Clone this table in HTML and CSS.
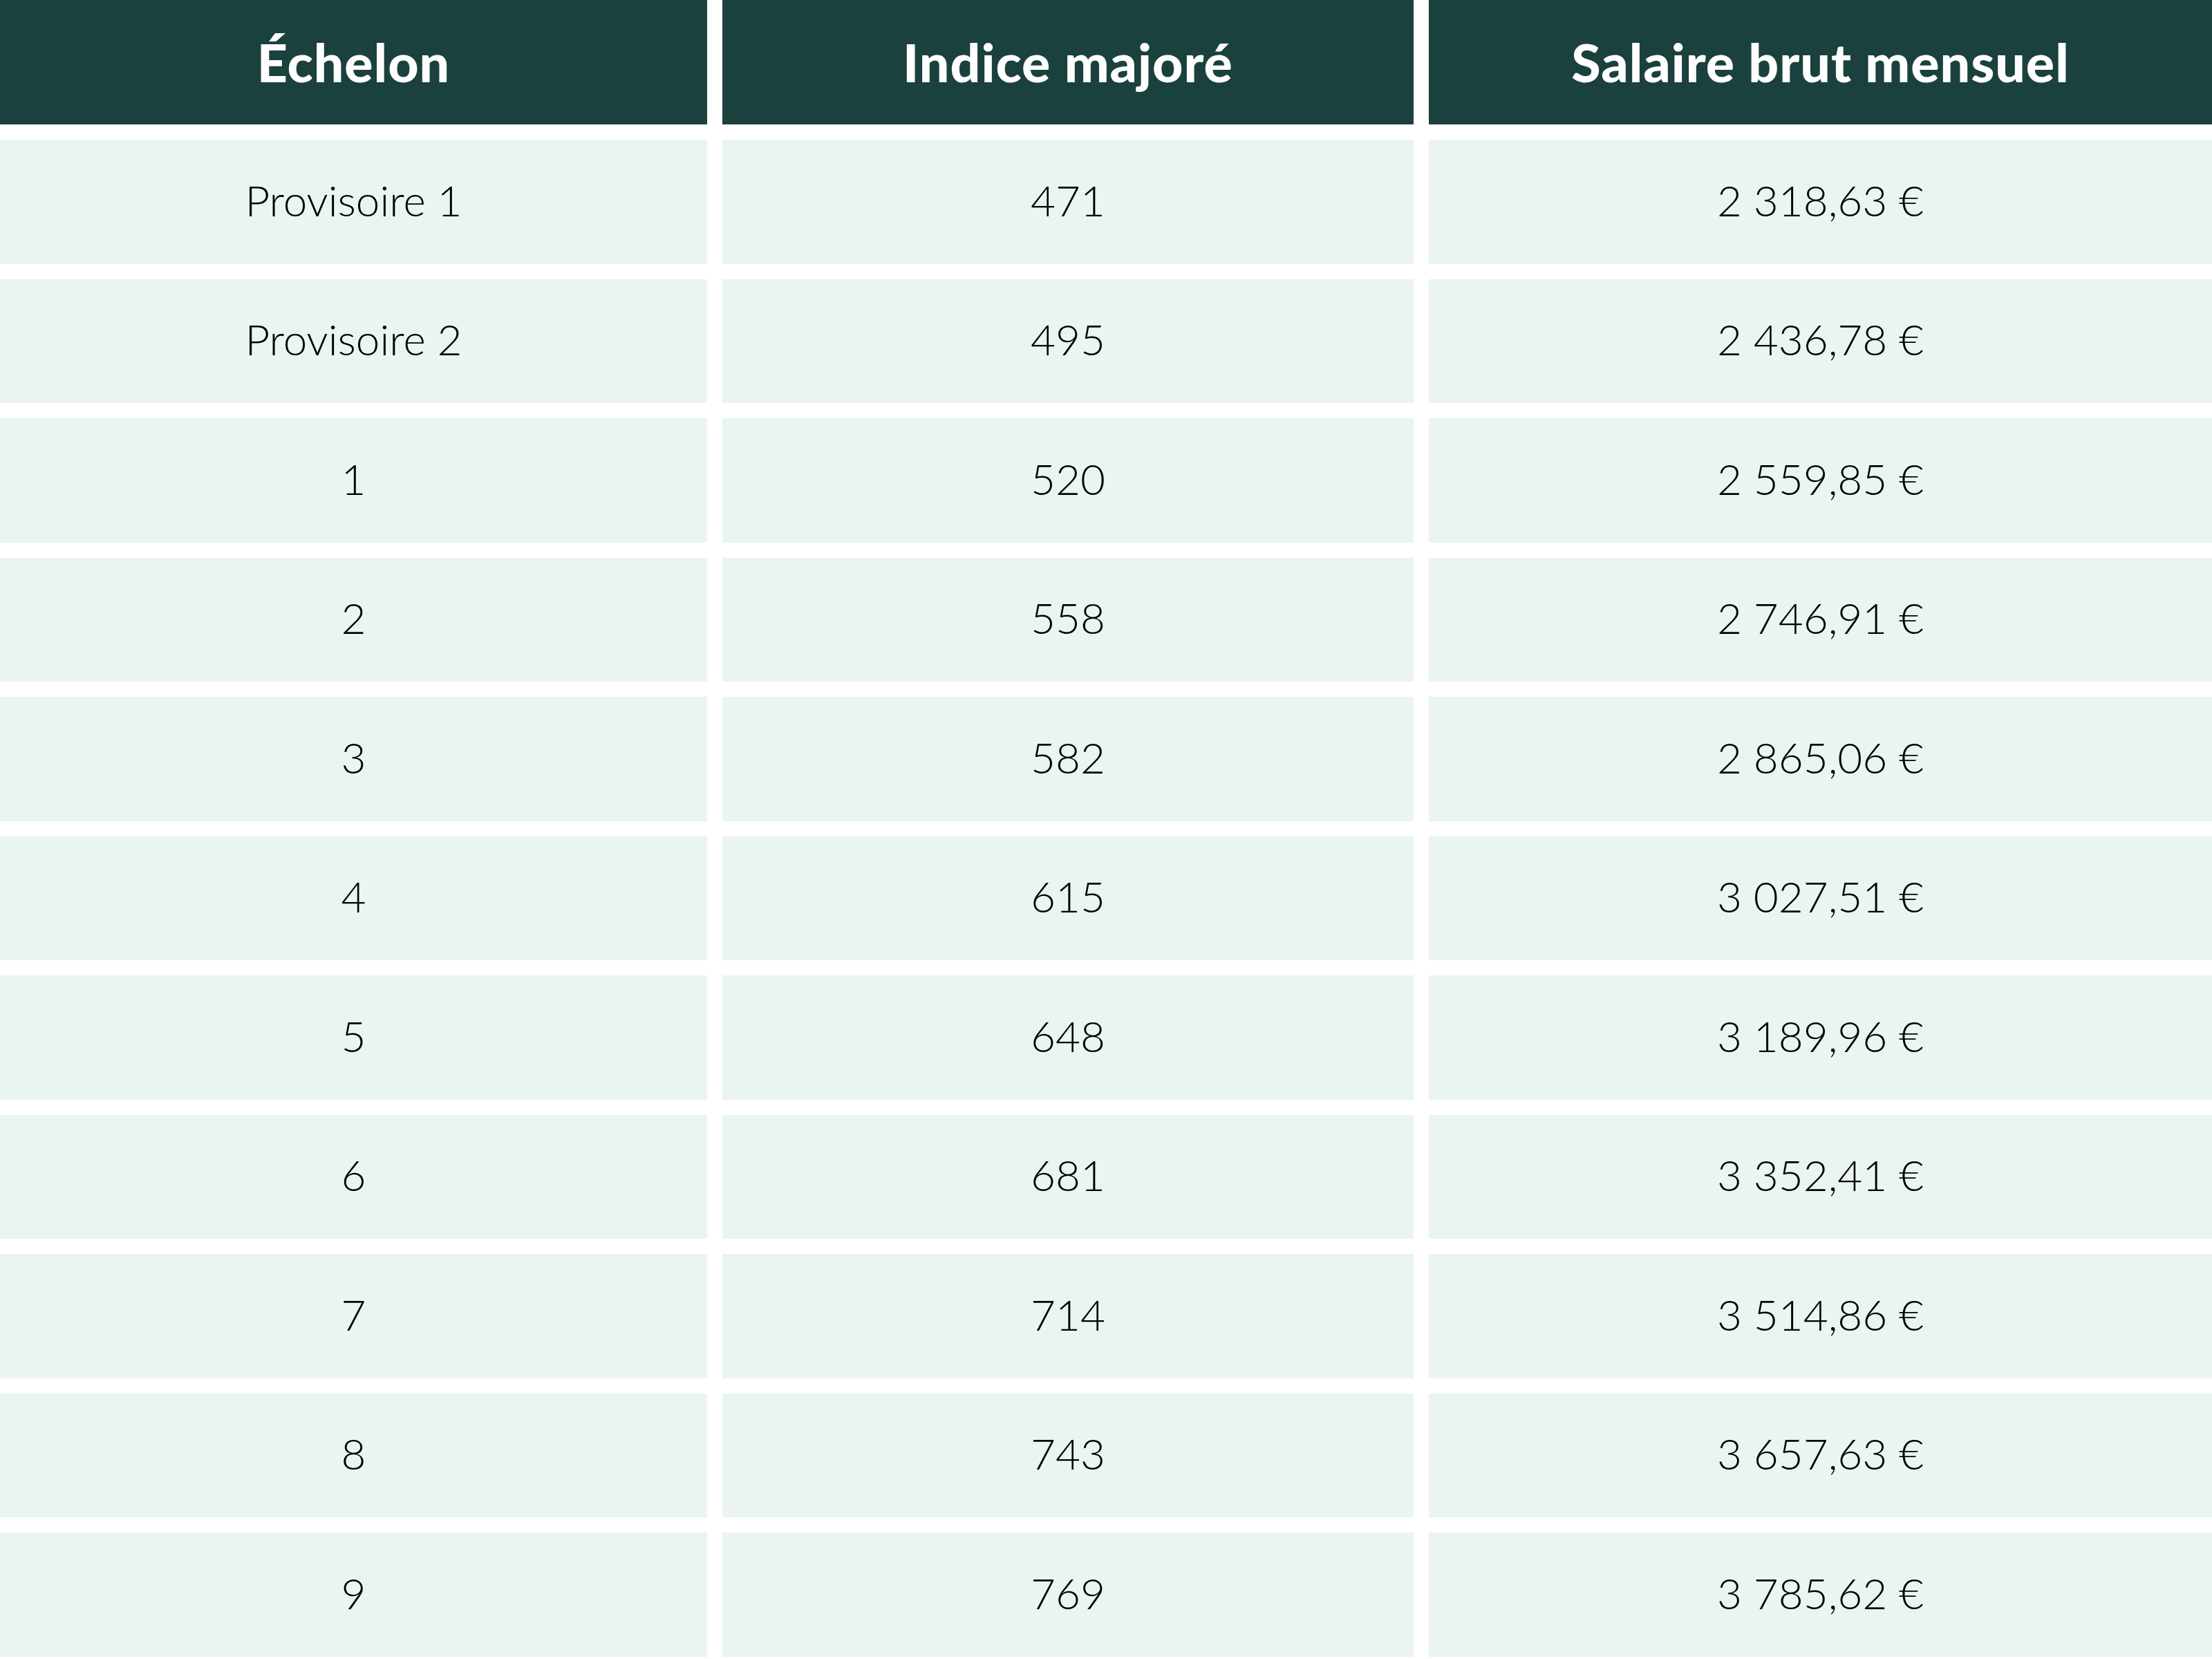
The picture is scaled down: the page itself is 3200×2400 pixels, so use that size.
FILE: index.html
```html
<!DOCTYPE html>
<html lang="fr">
<head>
<meta charset="utf-8">
<title>Grille indiciaire</title>
<link rel="stylesheet" href="styles.css">
</head>
<body>
<div class="table">
  <div class="cell head">Échelon</div>
  <div class="cell head">Indice majoré</div>
  <div class="cell head">Salaire brut mensuel</div>

  <div class="cell">Provisoire 1</div><div class="cell">471</div><div class="cell">2 318,63 €</div>
  <div class="cell">Provisoire 2</div><div class="cell">495</div><div class="cell">2 436,78 €</div>
  <div class="cell">1</div><div class="cell">520</div><div class="cell">2 559,85 €</div>
  <div class="cell">2</div><div class="cell">558</div><div class="cell">2 746,91 €</div>
  <div class="cell">3</div><div class="cell">582</div><div class="cell">2 865,06 €</div>
  <div class="cell">4</div><div class="cell">615</div><div class="cell">3 027,51 €</div>
  <div class="cell">5</div><div class="cell">648</div><div class="cell">3 189,96 €</div>
  <div class="cell">6</div><div class="cell">681</div><div class="cell">3 352,41 €</div>
  <div class="cell">7</div><div class="cell">714</div><div class="cell">3 514,86 €</div>
  <div class="cell">8</div><div class="cell">743</div><div class="cell">3 657,63 €</div>
  <div class="cell">9</div><div class="cell">769</div><div class="cell">3 785,62 €</div>
</div>
</body>
</html>
```
FILE: styles.css
```css
html, body {
  margin: 0;
  padding: 0;
  background: #ffffff;
}

.table {
  display: grid;
  grid-template-columns: 1023px 1000px 1fr;
  grid-template-rows: 180px;
  grid-auto-rows: 179.5px;
  column-gap: 22px;
  row-gap: 22px;
  width: 3200px;
}

.cell {
  display: flex;
  align-items: center;
  justify-content: center;
  background: #eaf4f2;
  color: #000000;
  font-family: "Lato", "Liberation Sans", sans-serif;
  font-weight: 300;
  font-size: 62px;
  white-space: nowrap;
  padding-bottom: 6px;
}

.head {
  background: #1a413d;
  color: #ffffff;
  font-weight: 900;
  font-size: 77px;
  letter-spacing: 1px;
  padding-bottom: 2px;
}
```
